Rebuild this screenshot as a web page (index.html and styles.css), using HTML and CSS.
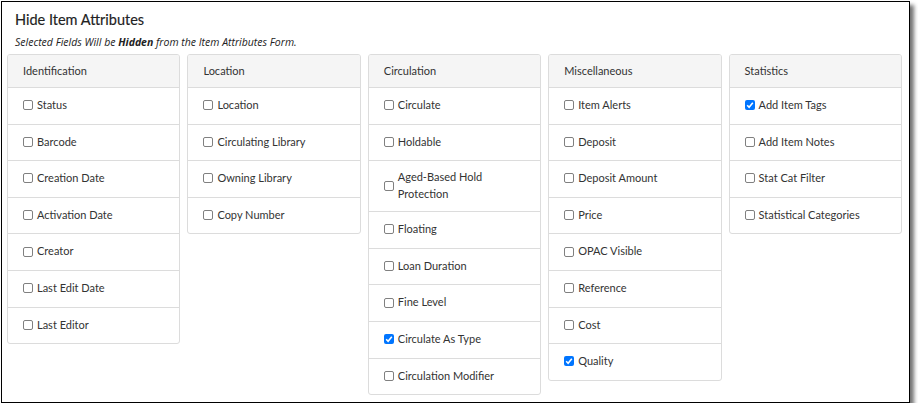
FILE: index.html
```html
<!DOCTYPE html>
<html>
<head>
<meta charset="utf-8">
<link rel="stylesheet" href="styles.css">
</head>
<body>
<div class="frame">
  <h1 class="title">Hide Item Attributes</h1>
  <p class="subtitle">Selected Fields Will be <b>Hidden</b> from the Item Attributes Form.</p>
  <div class="cards">
    <div class="card">
      <div class="card-head">Identification</div>
      <div class="row"><span class="cb"></span><span class="lbl">Status</span></div>
      <div class="row"><span class="cb"></span><span class="lbl">Barcode</span></div>
      <div class="row"><span class="cb"></span><span class="lbl">Creation Date</span></div>
      <div class="row"><span class="cb"></span><span class="lbl">Activation Date</span></div>
      <div class="row"><span class="cb"></span><span class="lbl">Creator</span></div>
      <div class="row"><span class="cb"></span><span class="lbl">Last Edit Date</span></div>
      <div class="row"><span class="cb"></span><span class="lbl">Last Editor</span></div>
    </div>
    <div class="card">
      <div class="card-head">Location</div>
      <div class="row"><span class="cb"></span><span class="lbl">Location</span></div>
      <div class="row"><span class="cb"></span><span class="lbl">Circulating Library</span></div>
      <div class="row"><span class="cb"></span><span class="lbl">Owning Library</span></div>
      <div class="row"><span class="cb"></span><span class="lbl">Copy Number</span></div>
    </div>
    <div class="card">
      <div class="card-head">Circulation</div>
      <div class="row"><span class="cb"></span><span class="lbl">Circulate</span></div>
      <div class="row"><span class="cb"></span><span class="lbl">Holdable</span></div>
      <div class="row"><span class="cb"></span><span class="lbl narrow">Aged-Based Hold Protection</span></div>
      <div class="row"><span class="cb"></span><span class="lbl">Floating</span></div>
      <div class="row"><span class="cb"></span><span class="lbl">Loan Duration</span></div>
      <div class="row"><span class="cb"></span><span class="lbl">Fine Level</span></div>
      <div class="row"><span class="cb on"><svg viewBox="0 0 10 10" width="10" height="10"><path d="M2.2 5.3 L4.1 7.2 L7.8 2.8" fill="none" stroke="#fff" stroke-width="1.6"/></svg></span><span class="lbl">Circulate As Type</span></div>
      <div class="row"><span class="cb"></span><span class="lbl">Circulation Modifier</span></div>
    </div>
    <div class="card">
      <div class="card-head">Miscellaneous</div>
      <div class="row"><span class="cb"></span><span class="lbl">Item Alerts</span></div>
      <div class="row"><span class="cb"></span><span class="lbl">Deposit</span></div>
      <div class="row"><span class="cb"></span><span class="lbl">Deposit Amount</span></div>
      <div class="row"><span class="cb"></span><span class="lbl">Price</span></div>
      <div class="row"><span class="cb"></span><span class="lbl">OPAC Visible</span></div>
      <div class="row"><span class="cb"></span><span class="lbl">Reference</span></div>
      <div class="row"><span class="cb"></span><span class="lbl">Cost</span></div>
      <div class="row"><span class="cb on"><svg viewBox="0 0 10 10" width="10" height="10"><path d="M2.2 5.3 L4.1 7.2 L7.8 2.8" fill="none" stroke="#fff" stroke-width="1.6"/></svg></span><span class="lbl">Quality</span></div>
    </div>
    <div class="card">
      <div class="card-head">Statistics</div>
      <div class="row"><span class="cb on"><svg viewBox="0 0 10 10" width="10" height="10"><path d="M2.2 5.3 L4.1 7.2 L7.8 2.8" fill="none" stroke="#fff" stroke-width="1.6"/></svg></span><span class="lbl">Add Item Tags</span></div>
      <div class="row"><span class="cb"></span><span class="lbl">Add Item Notes</span></div>
      <div class="row"><span class="cb"></span><span class="lbl">Stat Cat Filter</span></div>
      <div class="row"><span class="cb"></span><span class="lbl">Statistical Categories</span></div>
    </div>
  </div>
</div>
</body>
</html>
```

FILE: styles.css
```css
html, body {
  margin: 0;
  padding: 0;
  background: #fff;
}
body {
  font-family: Lato, "Open Sans", sans-serif;
  color: #333;
}
.frame {
  box-sizing: border-box;
  margin: 1px 0 0 1px;
  width: 909px;
  height: 402px;
  border: 1px solid #000;
  background: #fff;
  box-shadow: 4px 4px 4px rgba(0, 0, 0, 0.55);
  padding: 8px 7px 0 5px;
}
.title {
  margin: 0 0 0 8px;
  font-size: 14.5px;
  line-height: 20px;
  font-weight: 400;
  color: #222;
  -webkit-text-stroke: 0.15px #222;
}
.subtitle {
  margin: 5px 0 5px 8px;
  font-family: "Open Sans", sans-serif;
  font-size: 10.5px;
  line-height: 14px;
  font-style: italic;
  color: #222;
}
.subtitle b {
  font-weight: 700;
}
.cards {
  display: grid;
  grid-template-columns: repeat(5, 1fr);
  gap: 7px;
  align-items: start;
}
.card {
  border: 1px solid #dcdcdc;
  border-radius: 3px;
  background: #fff;
  overflow: hidden;
}
.card-head {
  background: #f5f5f5;
  border-bottom: 1px solid #dcdcdc;
  padding: 8px 15px;
  font-size: 11px;
  line-height: 16px;
}
.row {
  display: flex;
  align-items: center;
  padding: 8px 15px 9px;
  min-height: 18.6px;
  border-bottom: 1px solid #dcdcdc;
  font-size: 11px;
  line-height: 16.5px;
}
.row:last-child {
  border-bottom: none;
}
.cb {
  flex: none;
  box-sizing: border-box;
  width: 10px;
  height: 10px;
  border: 1px solid #808080;
  border-radius: 2px;
  margin-right: 4px;
  background: #fff;
  display: flex;
}
.cb.on {
  border: none;
  background: #0075ff;
}
.cb svg {
  display: block;
}
.lbl.narrow {
  max-width: 100px;
}
```
